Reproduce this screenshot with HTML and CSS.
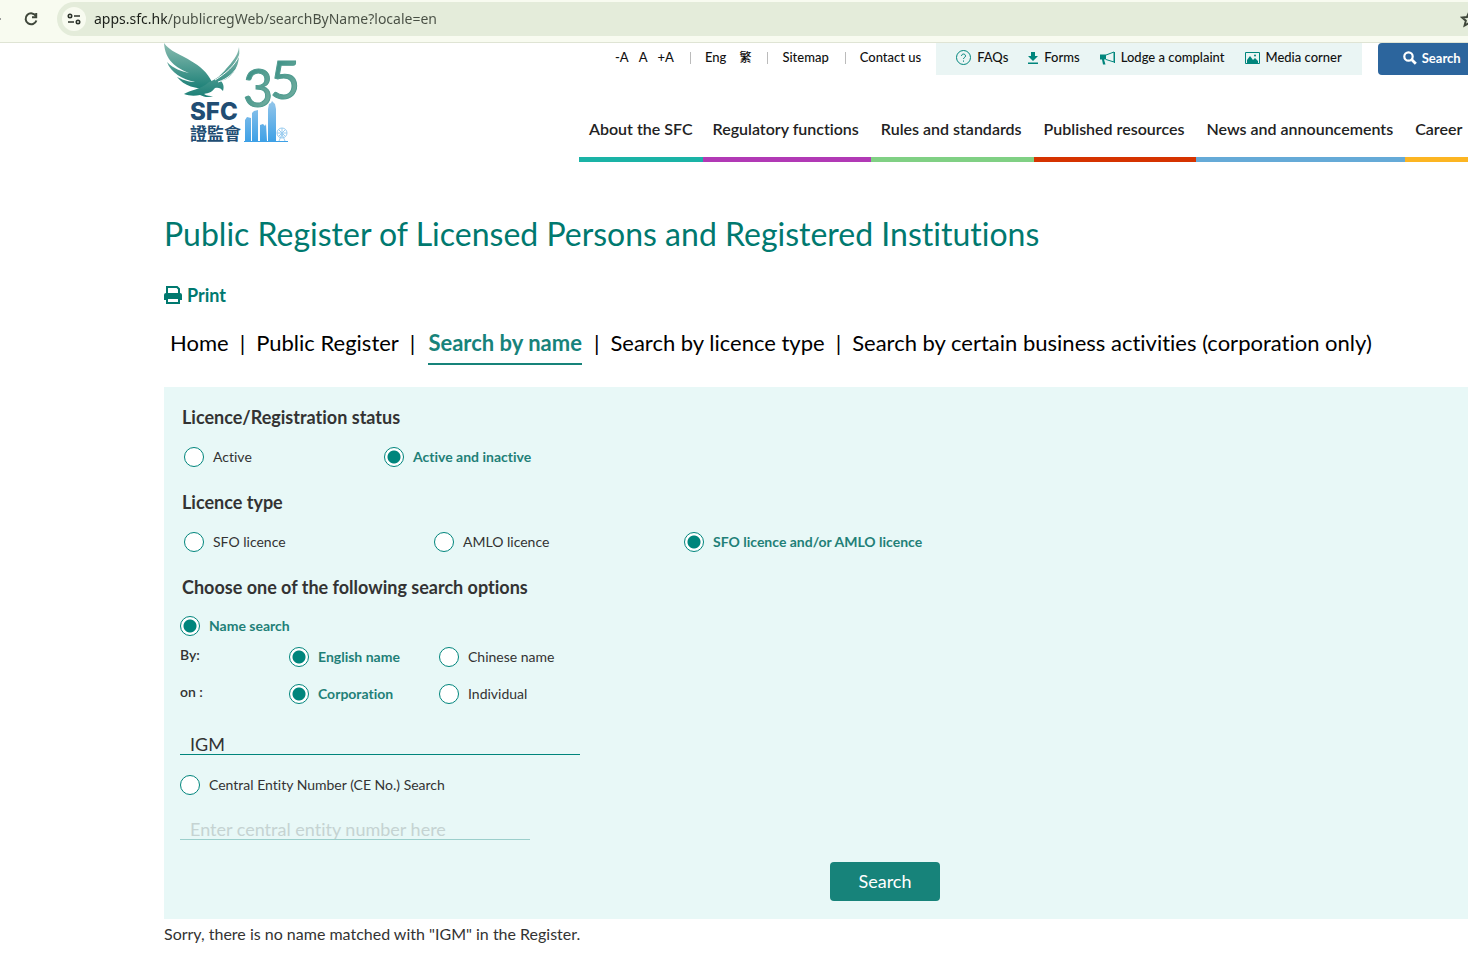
FILE: index.html
```html
<!DOCTYPE html>
<html lang="en">
<head>
<meta charset="utf-8">
<meta name="viewport" content="width=device-width, initial-scale=1.0">
<title>Public Register of Licensed Persons and Registered Institutions</title>
<link rel="stylesheet" href="styles.css">
</head>
<body>

<div class="browser-bar">
  <span class="nav-arrow"></span>
  <button class="reload" type="button" aria-label="Reload">
    <svg width="16" height="16" viewBox="0 0 16 16" fill="none" stroke="#3f473b" stroke-width="2"><path d="M13 5.2A5.5 5.5 0 1 0 13.4 9.500"/><path d="M13.200 2v4.300H9"/></svg>
  </button>
  <div class="address">
    <button class="site-info" type="button" aria-label="Site information">
      <svg width="14" height="12" viewBox="0 0 14 12" fill="none" stroke="#2c332a" stroke-width="1.600"><circle cx="3" cy="3" r="1.700"/><path d="M7 3h6M1 9h6"/><circle cx="11" cy="9" r="1.700"/></svg>
    </button>
    <input class="url" type="text" aria-label="Address" value="apps.sfc.hk/publicregWeb/searchByName?locale=en">
    <svg class="star" width="18" height="18" viewBox="0 0 18 18" fill="none" stroke="#3f473b" stroke-width="2"><path d="M9 2.500l2 4.500 5 .5-3.800 3.200 1.200 4.800L9 13l-4.400 2.500 1.200-4.800L2 7.500 7 7z"/></svg>
  </div>
</div>

<header class="header">
  <a class="logo" href="#" aria-label="SFC 35">
    <svg width="136" height="102" viewBox="0 0 136 102">
      <defs>
        <linearGradient id="wing" x1="0" y1="0" x2="0" y2="1"><stop offset="0" stop-color="#8abcb0"/><stop offset="1" stop-color="#1c8077"/></linearGradient>
        <linearGradient id="num" x1="0" y1="0" x2="1" y2="1"><stop offset="0" stop-color="#2b877e"/><stop offset="1" stop-color="#7fb5a6"/></linearGradient>
        <linearGradient id="city" x1="0" y1="0" x2="0" y2="1"><stop offset="0" stop-color="#94c6ea"/><stop offset="1" stop-color="#3da0e6"/></linearGradient>
      </defs>
      <!-- left wing with its feathers, then right wing, body and tail -->
      <path fill="url(#wing)" d="M0 0C5 8 18 12 27 18C36 23 43 29 48 39L45 46C32 46 20 43 13 34C21 38 26 39 31 39C18 36 7 30 3 19C10 26 17 28 25 30C12 25 1 17 0 0z"/>
      <path fill="url(#wing)" d="M45 39C52 37 58 31 62 26C68 19 74 13 75 4C77 22 69 35 57 38C60 41 60 45 59 48C57 45 54 44 51 45C48 49 45 50 40 51C43 53 46 53 49 53C45 55 40 54 36 52C31 53 25 53 20 51C26 47 36 47 45 39z"/>
      <path fill="none" stroke="#fff" d="M51 37C61 31 71 23 76 11M54 39C64 36 71 29 76 20"/>
      <text class="logo-35" x="79" y="64" fill="url(#num)" stroke="#4f9b8f">3</text>
      <text class="logo-35" x="106" y="56" fill="url(#num)" stroke="#4f9b8f">5</text>
      <text class="logo-sfc" x="26" y="77">SFC</text>
      <text class="logo-cjk" x="26" y="97">證監會</text>
      <path fill="url(#city)" d="M81 98V77l2-3 4 1v23zM88 98V70l2-2 4-1v31zM96 98V82l3-1 2 2 1-2 1 17zM104 98V66l1-5 2-1 1-2 3 3 1 5v32h3v1h-11z"/>
      <g fill="none" stroke="#9bcdf0"><circle cx="118" cy="90" r="5"/><path d="M113 90h10M118 85v10M114.500 86.500l7 7M121.500 86.500l-7 7M118 91l-3 7M118 91l3 7"/></g>
      <path stroke="#3da0e6" d="M80 98.500h44"/>
    </svg>
  </a>

  <div class="header-right">
    <div class="top-links">
      <div class="font-size"><a href="#">-A</a><a href="#">A</a><a href="#">+A</a></div>
      <div class="lang"><a href="#">Eng</a><a class="zh" href="#">繁</a></div>
      <a class="plain" href="#">Sitemap</a>
      <a class="plain last" href="#">Contact us</a>
      <div class="quick-links">
        <a href="#"><svg width="15" height="15" viewBox="0 0 15 15" fill="none" stroke="#00857c"><circle cx="7.500" cy="7.500" r="7"/><path d="M5.500 6c0-2.600 4-2.600 4 0 0 1.500-2 1.500-2 3M7.500 10.500v1.200"/></svg>FAQs</a>
        <a href="#"><svg width="10" height="12" viewBox="0 0 10 12" fill="#00857c"><path d="M3 0h4v4h3L5 9 0 4h3zM0 10.500h10V12H0z"/></svg>Forms</a>
        <a href="#"><svg width="15" height="14" viewBox="0 0 15 14" fill="#00857c"><path d="M0 3.500h6v5H4l1.500 5H3L2 8.500H0z"/><path d="M6 4l8-3v10L6 8.500M14.500 1v11" fill="none" stroke="#00857c"/></svg>Lodge a complaint</a>
        <a href="#"><svg width="15" height="12" viewBox="0 0 15 12" fill="#00857c"><path d="M.5.5h14v11H.5z" fill="none" stroke="#00857c"/><path d="M2 11V8l3-4 3 4 2-2 3 3v2z"/><circle cx="10" cy="3.500" r="1"/></svg>Media corner</a>
      </div>
      <button class="site-search" type="button"><svg width="14" height="14" viewBox="0 0 14 14" fill="none" stroke="#fff"><circle cx="5.500" cy="5.500" r="4.200" stroke-width="2.200"/><path d="M8.800 8.800l4 4" stroke-width="2.800"/></svg>Search</button>
    </div>
    <nav class="main-nav">
      <a class="about" href="#">About the SFC</a>
      <a class="regulatory" href="#">Regulatory functions</a>
      <a class="rules" href="#">Rules and standards</a>
      <a class="published" href="#">Published resources</a>
      <a class="news" href="#">News and announcements</a>
      <a class="career" href="#">Career</a>
    </nav>
  </div>
</header>

<main class="content">
  <h1>Public Register of Licensed Persons and Registered Institutions</h1>
  <a class="print" href="#"><svg width="18" height="18" viewBox="0 0 18 18" fill="#00796f"><path d="M3 9V1h10l2 2v6" fill="none" stroke="#00796f" stroke-width="2"/><path d="M2 7h14a2 2 0 0 1 2 2v5H0V9a2 2 0 0 1 2-2z"/><path d="M3 12h12v5H3z" fill="#fff" stroke="#00796f" stroke-width="2"/></svg>Print</a>

  <nav class="tabs">
    <a href="#">Home</a><span>|</span>
    <a href="#">Public Register</a><span>|</span>
    <a class="active" href="#">Search by name</a><span>|</span>
    <a href="#">Search by licence type</a><span>|</span>
    <a href="#">Search by certain business activities (corporation only)</a>
  </nav>

  <form class="search-form">
    <h2>Licence/Registration status</h2>
    <div class="options status">
      <label><input type="radio" name="status"><span>Active</span></label>
      <label><input type="radio" name="status" checked><span>Active and inactive</span></label>
    </div>
    <h2>Licence type</h2>
    <div class="options type">
      <label><input type="radio" name="type"><span>SFO licence</span></label>
      <label><input type="radio" name="type"><span>AMLO licence</span></label>
      <label><input type="radio" name="type" checked><span>SFO licence and/or AMLO licence</span></label>
    </div>
    <h2>Choose one of the following search options</h2>
    <div class="search-by">
      <label><input type="radio" name="searchby" checked><span>Name search</span></label>
      <div class="name-row">
        <strong>By:</strong>
        <label><input type="radio" name="lang" checked><span>English name</span></label>
        <label><input type="radio" name="lang"><span>Chinese name</span></label>
      </div>
      <div class="name-row">
        <strong>on :</strong>
        <label><input type="radio" name="entity" checked><span>Corporation</span></label>
        <label><input type="radio" name="entity"><span>Individual</span></label>
      </div>
      <input class="text-field name-field" type="text" aria-label="Name" value="IGM">
      <label><input type="radio" name="searchby"><span>Central Entity Number (CE No.) Search</span></label>
      <input class="text-field ce-field" type="text" aria-label="Central entity number" placeholder="Enter central entity number here">
    </div>
    <div class="actions"><button class="submit-btn" type="button">Search</button></div>
  </form>
  <p class="result">Sorry, there is no name matched with "IGM" in the Register.</p>
</main>

</body>
</html>
```
FILE: styles.css
```css
* { box-sizing: border-box; }
body { margin: 0; font-family: Lato, "Noto Sans CJK TC", sans-serif; font-variant-ligatures: none; color: #333; background: #fff; }
a { color: inherit; text-decoration: none; }
button { border: none; font-family: inherit; cursor: pointer; }

/* address bar */
.browser-bar { display: flex; align-items: flex-start; height: 43px; padding-top: 2px; background: #f8fbf0; border-bottom: 1px solid #dfe4d4; }
.nav-arrow { width: 1px; height: 2px; margin-top: 16px; background: #999; }
.reload { display: flex; margin: 9px 18px 0 22px; padding: 0; background: none; }
.address { flex: 1; display: flex; align-items: center; height: 34px; padding-left: 5px; background: #e4ecda; border-radius: 17px 0 0 17px; overflow: hidden; }
.site-info { display: flex; align-items: center; justify-content: center; flex: none; width: 24px; height: 24px; padding: 0; border-radius: 50%; background: #f8fbf0; }
.url {
    flex: 1; padding: 0 0 2px; margin-left: 8px; border: none; outline: none; font: 14px "Noto Sans", sans-serif; color: transparent;
    background: linear-gradient(to right, #1b1f19 74px, #474e43 74px); -webkit-background-clip: text; background-clip: text;
}
.star { flex: none; margin-right: -10px; }

/* header */
.header { display: flex; align-items: flex-start; padding-left: 164px; }
.logo { flex: none; width: 136px; height: 102px; }
.logo svg { display: block; overflow: visible; }
.logo-35 { font: 52px Lato, sans-serif; }
.logo-sfc { font: 800 24px Inter, sans-serif; fill: #214d73; }
.logo-cjk { font: bold 17px "Noto Sans CJK TC", sans-serif; fill: #214d73; }
.header-right { flex: 1; min-width: 0; margin-left: 279px; }
.top-links { display: flex; align-items: flex-start; padding-left: 36px; font-size: 13px; line-height: 29px; color: #111; white-space: nowrap; font-weight: 500; }
.font-size, .lang { display: flex; }
.font-size { gap: 10px; }
.lang { gap: 13px; }
.zh { font-size: 12px; }
.lang::before, .plain::before { content: ""; width: 1px; height: 12px; margin: 9px 14px 0 16px; background: #bbb; }
.lang::before { margin-right: 1px; }
.plain { display: flex; }
.last { margin-right: 15px; }
.quick-links { display: flex; gap: 20px; height: 32px; padding: 0 20px; background: #eaf5f4; }
.quick-links a { display: flex; align-items: center; gap: 6px; height: 29px; }
.site-search { flex: 1; display: flex; align-items: center; gap: 5px; height: 32px; margin-left: 16px; padding: 0 0 2px 25px; border-radius: 4px 0 0 4px; background: #2c659d; color: #fff; font-size: 13px; font-weight: bold; }
.main-nav { display: flex; margin-top: 36px; font-size: 16px; font-weight: 600; line-height: 36px; color: #222; white-space: nowrap; }
.main-nav a { height: 51px; padding: 0 12px 0 10px; border-bottom: 5px solid; }
.main-nav .about { padding-right: 10px; border-color: #1ab3a6; }
.main-nav .regulatory { border-color: #b139b5; }
.main-nav .rules { border-color: #80d084; }
.main-nav .published { border-color: #d53300; }
.main-nav .news { border-color: #65aad7; }
.main-nav .career { flex: 1; padding-right: 0; border-color: #fcb522; }

/* content */
.content { margin: 50px 0 0 164px; }
h1 { margin: 0; font-size: 32px; font-weight: 400; line-height: 44px; color: #00796f; }
.print { display: flex; align-items: center; gap: 5px; width: 80px; margin-top: 27px; font-size: 18px; font-weight: bold; line-height: 24px; color: #00796f; }
.tabs { display: flex; padding-left: 6px; margin-top: 19px; font-size: 22px; line-height: 34px; color: #000; white-space: nowrap; }
.tabs a { height: 39px; }
.tabs span { margin: 0 11px; }
.tabs .active { margin: 0 1px 0 2px; font-weight: bold; color: #17837a; border-bottom: 2px solid #17837a; }

.search-form { margin-top: 22px; padding: 18px 16px; background: #e8f8f7; }
h2 { margin: 0 0 0 2px; font-size: 18px; font-weight: bold; line-height: 24px; color: #333; }
.options { display: flex; padding-left: 4px; margin: 17px 0 23px; }
.options label { width: 200px; }
.type label { width: 250px; }
.search-form label { display: flex; align-items: center; gap: 9px; height: 21px; font-size: 14px; white-space: nowrap; }
input[type="radio"] { appearance: none; flex: none; width: 20px; height: 20px; margin: 0; border: 1px solid #00857c; border-radius: 50%; background: #fff; }
input[type="radio"]:checked { background: radial-gradient(circle, #00857c 6px, #fff 7px); }
input[type="radio"]:checked + span { font-weight: bold; color: #1f8078; }
.search-by { margin-top: 16px; }
.name-row { display: flex; height: 21px; margin-top: 10px; }
.name-row + .name-row { margin-top: 16px; }
.name-row strong { width: 109px; font-size: 14px; line-height: 17px; font-weight: 600; }
.name-row label { width: 150px; }
.text-field { display: block; height: 25px; padding: 4px 10px 0; border: none; border-bottom: 1px solid #00857c; outline: none; background: none; font: 18px Lato, sans-serif; font-variant-ligatures: none; color: #333; }
.name-field { width: 400px; margin: 26px 0 19px; }
.ce-field { width: 350px; margin-top: 20px; border-color: #9ccfcc; }
.ce-field::placeholder { color: #c5d3d2; }
.actions { display: flex; justify-content: center; padding-left: 138px; margin-top: 22px; }
.submit-btn { width: 110px; height: 39px; padding: 0 0 2px; border-radius: 4px; background: #17837a; color: #fff; font-size: 18px; }
.result { margin: 3px 0 0; font-size: 16px; line-height: 24px; }
```
